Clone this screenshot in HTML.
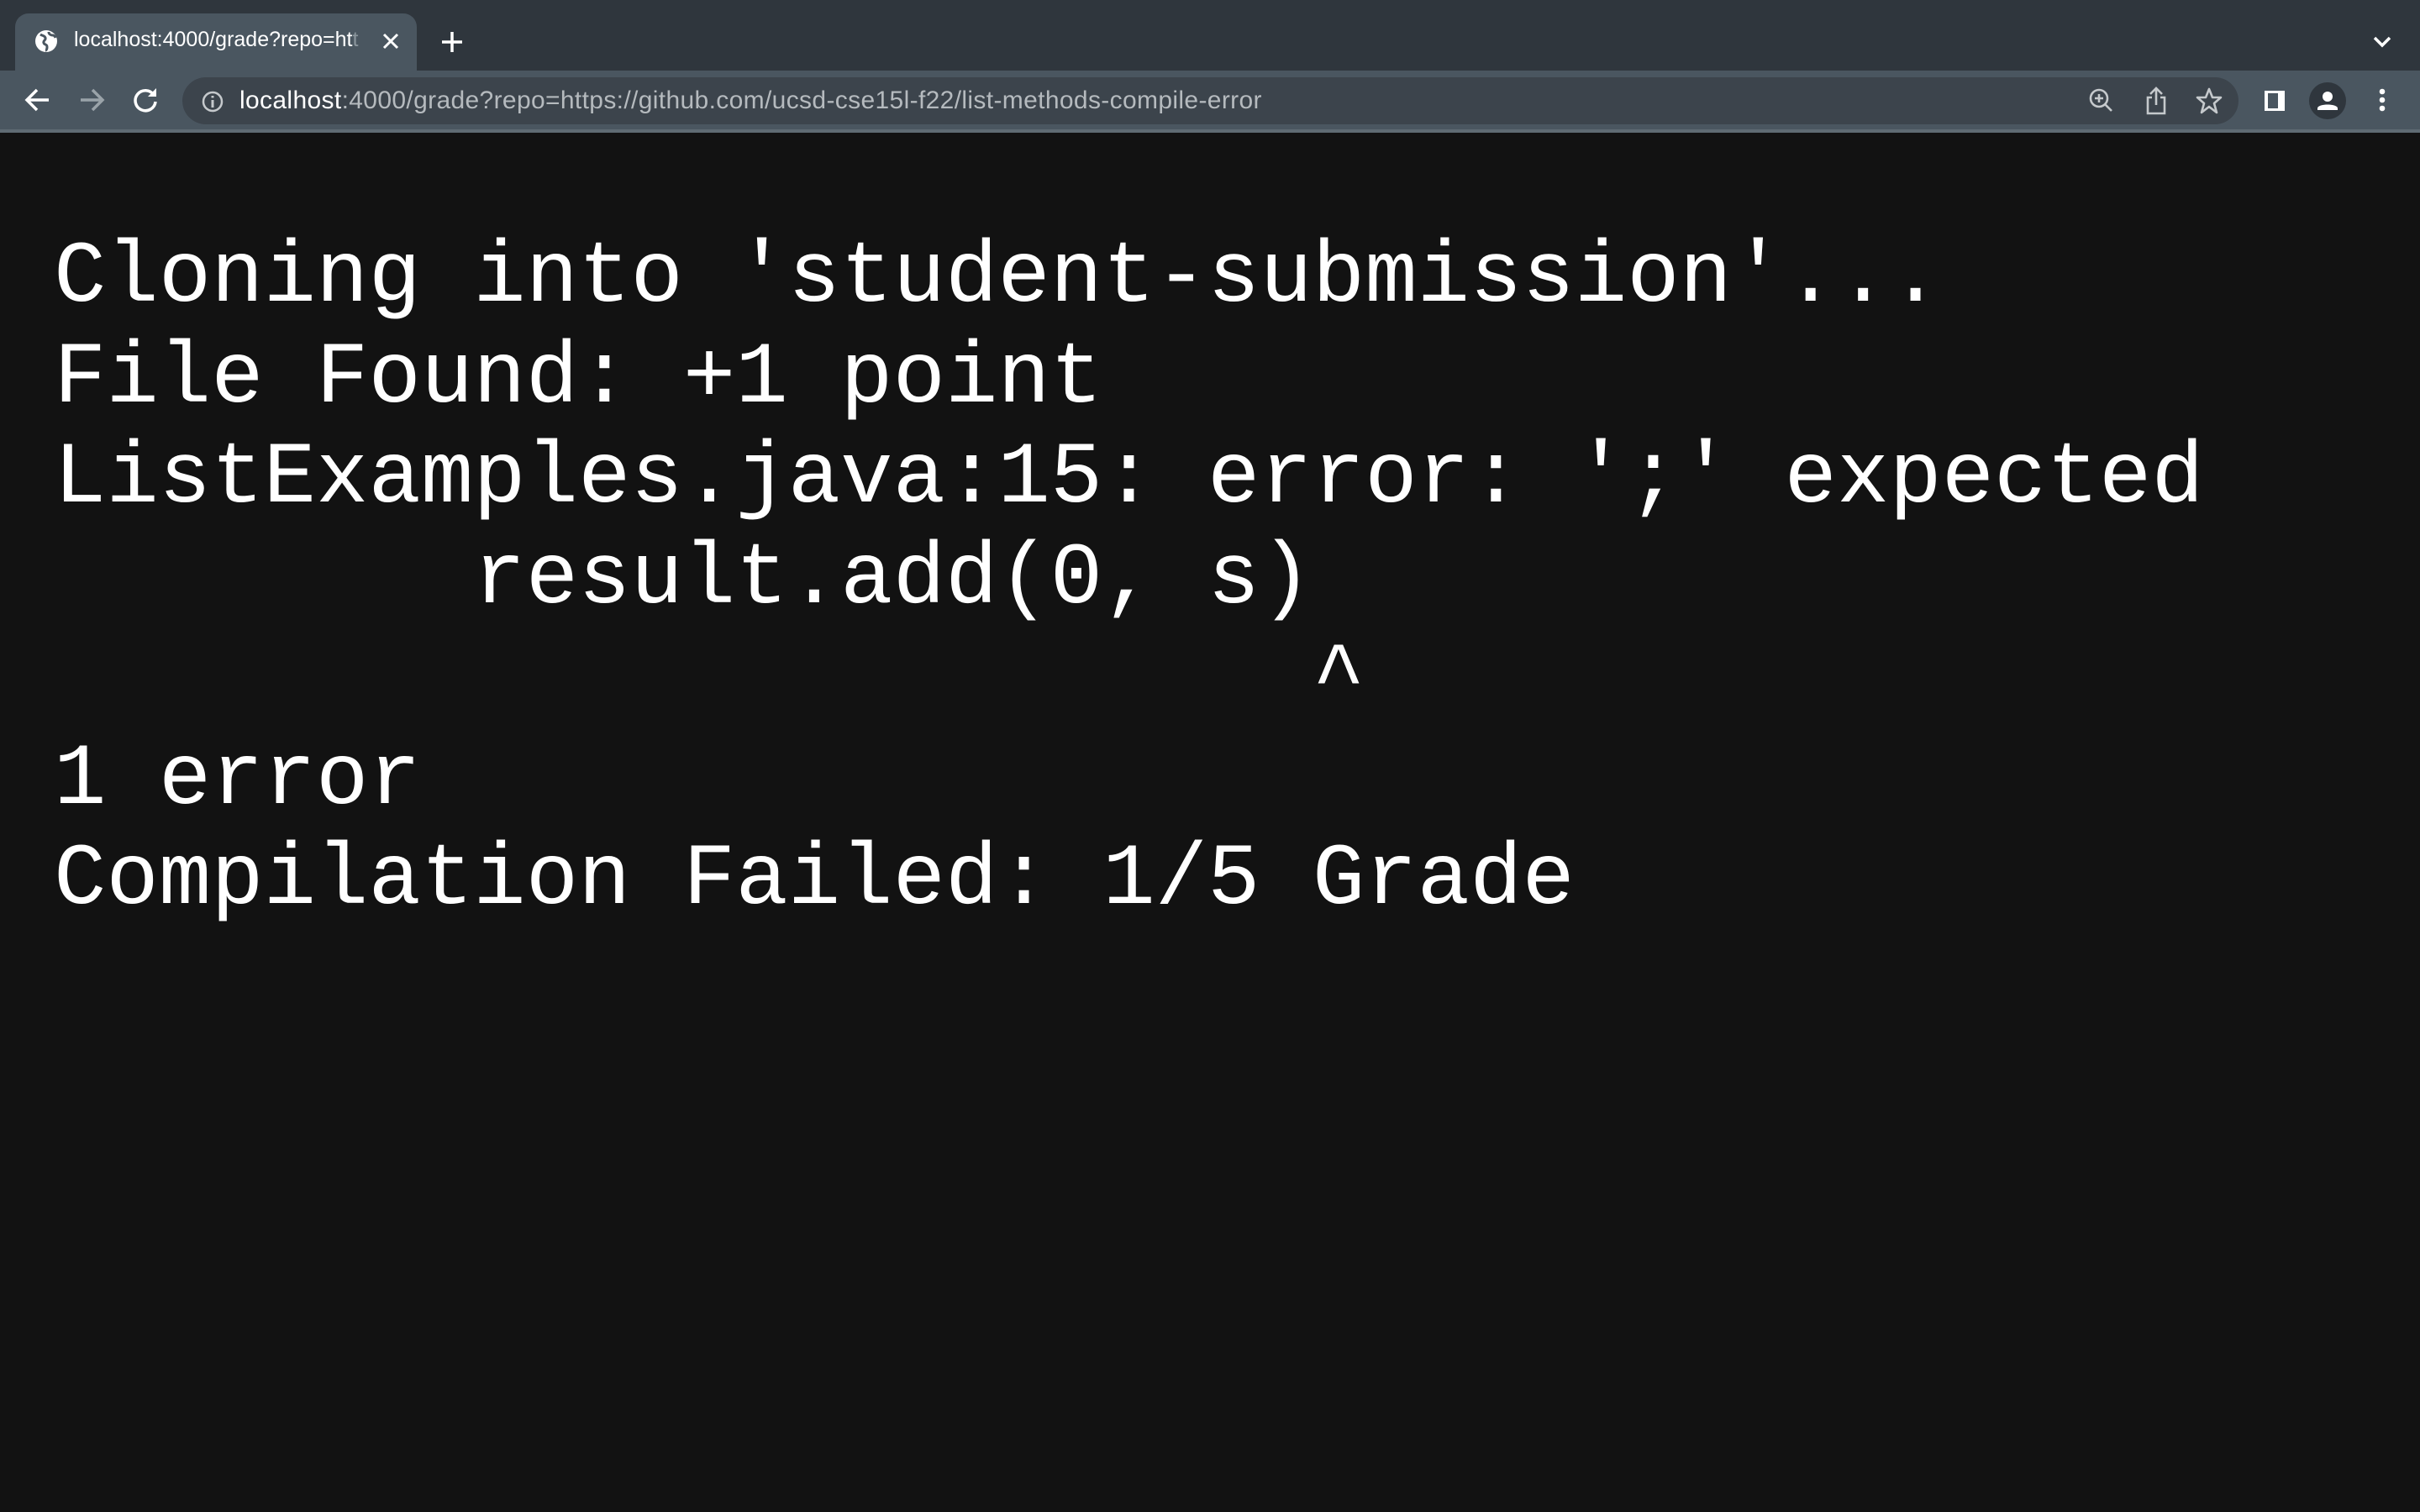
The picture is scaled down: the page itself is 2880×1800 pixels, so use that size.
<!DOCTYPE html>
<html><head><meta charset="utf-8"><style>
html,body{margin:0;padding:0;width:2880px;height:1800px;overflow:hidden;background:#121212;font-family:"Liberation Sans",sans-serif}
#tabbar{position:absolute;left:0;top:0;width:2880px;height:84px;background:#2f363d}
#tab{position:absolute;left:18px;top:16px;width:478px;height:68px;background:#4a5660;border-radius:16px 16px 0 0}
#toolbar{position:absolute;left:0;top:84px;width:2880px;height:70px;background:#4a5660;border-bottom:4px solid #5f6b73}
#omni{position:absolute;left:217px;top:8px;width:2447px;height:56px;background:#3c444c;border-radius:28px}
.t{position:absolute;color:#fff;white-space:nowrap}
pre{position:absolute;left:64px;top:272px;margin:0;font-family:"Liberation Mono","Courier New",monospace;font-size:104px;line-height:119.5px;color:#fff}
svg{position:absolute}
</style></head><body>
<div id="tabbar">
 <div id="tab">
  <svg style="left:22px;top:18px" width="30" height="30" viewBox="0 0 30 30"><circle cx="15" cy="15" r="13" fill="#fff"/><path d="M8 7c3 2 5 1 6 4s-3 3-2 6 4 1 4 5-2 4-2 4M18 4c0 3 3 4 5 4s3 3 3 3" stroke="#4a5660" stroke-width="3" fill="none"/></svg>
  <div class="t" style="left:70px;top:17px;font-size:25px">localhost:4000/grade?repo=ht<span style="color:#8a959c">t</span></div>
  <svg style="left:436px;top:22px" width="22" height="22" viewBox="0 0 22 22"><path d="M3 3L19 19M19 3L3 19" stroke="#fff" stroke-width="3"/></svg>
 </div>
 <svg style="left:524px;top:36px" width="28" height="28" viewBox="0 0 28 28"><path d="M14 2V26M2 14H26" stroke="#fff" stroke-width="3.5"/></svg>
 <svg style="left:2823px;top:42px" width="24" height="16" viewBox="0 0 24 16"><path d="M3 3L12 12L21 3" stroke="#fff" stroke-width="3.5" fill="none"/></svg>
</div>
<div id="toolbar">
 <svg style="left:28px;top:18px" width="34" height="34" viewBox="0 0 34 34"><path d="M30 17H5M16 5L4 17L16 29" stroke="#fff" stroke-width="3.5" fill="none"/></svg>
 <svg style="left:92px;top:18px" width="34" height="34" viewBox="0 0 34 34"><path d="M4 17H29M18 5L30 17L18 29" stroke="#9aa3a9" stroke-width="3.5" fill="none"/></svg>
 <svg style="left:156px;top:18px" width="34" height="34" viewBox="0 0 34 34"><path d="M27 11A12 12 0 1 0 29 19" stroke="#fff" stroke-width="3.5" fill="none"/><path d="M30 3V13H20Z" fill="#fff"/></svg>
 <div id="omni">
  <svg style="left:22px;top:15px" width="28" height="28" viewBox="0 0 28 28"><circle cx="14" cy="14" r="11" stroke="#c5c9cc" stroke-width="2.5" fill="none"/><path d="M14 12V21M14 7V9.5" stroke="#c5c9cc" stroke-width="3"/></svg>
  <div class="t" style="left:68px;top:11px;font-size:30px;letter-spacing:0.35px">localhost<span style="color:#b5babe">:4000/grade?repo=https://github.com/ucsd-cse15l-f22/list-methods-compile-error</span></div>
  <svg style="left:2268px;top:12px" width="32" height="32" viewBox="0 0 32 32"><circle cx="13" cy="13" r="10" stroke="#c5c9cc" stroke-width="2.6" fill="none"/><path d="M20 20L28 28M13 8V18M8 13H18" stroke="#c5c9cc" stroke-width="2.6"/></svg>
  <svg style="left:2334px;top:10px" width="30" height="36" viewBox="0 0 30 36"><path d="M10 14H5V33H25V14H20M15 23V3M8 10L15 3L22 10" stroke="#c5c9cc" stroke-width="2.6" fill="none"/></svg>
  <svg style="left:2395px;top:11px" width="34" height="34" viewBox="0 0 34 34"><path d="M17 3L21 13L31 13L23 20L26 31L17 24L8 31L11 20L3 13L13 13Z" stroke="#c5c9cc" stroke-width="2.6" fill="none" stroke-linejoin="round"/></svg>
 </div>
 <svg style="left:2693px;top:22px" width="28" height="28" viewBox="0 0 28 28"><rect x="2" y="2" width="24" height="24" fill="#fff"/><rect x="6" y="5" width="12" height="18" fill="#4a5660"/></svg>
 <svg style="left:2748px;top:14px" width="44" height="44" viewBox="0 0 44 44"><circle cx="22" cy="22" r="22" fill="#2f363d"/><circle cx="22" cy="17" r="6" fill="#fff"/><path d="M10 31c0-6 24-6 24 0v2H10Z" fill="#fff"/></svg>
 <svg style="left:2828px;top:20px" width="14" height="34" viewBox="0 0 14 34"><circle cx="7" cy="5" r="3.3" fill="#fff"/><circle cx="7" cy="15" r="3.3" fill="#fff"/><circle cx="7" cy="25" r="3.3" fill="#fff"/></svg>
</div>
<pre>Cloning into 'student-submission'...
File Found: +1 point
ListExamples.java:15: error: ';' expected
        result.add(0, s)
                        ^
1 error
Compilation Failed: 1/5 Grade</pre>
</body></html>
